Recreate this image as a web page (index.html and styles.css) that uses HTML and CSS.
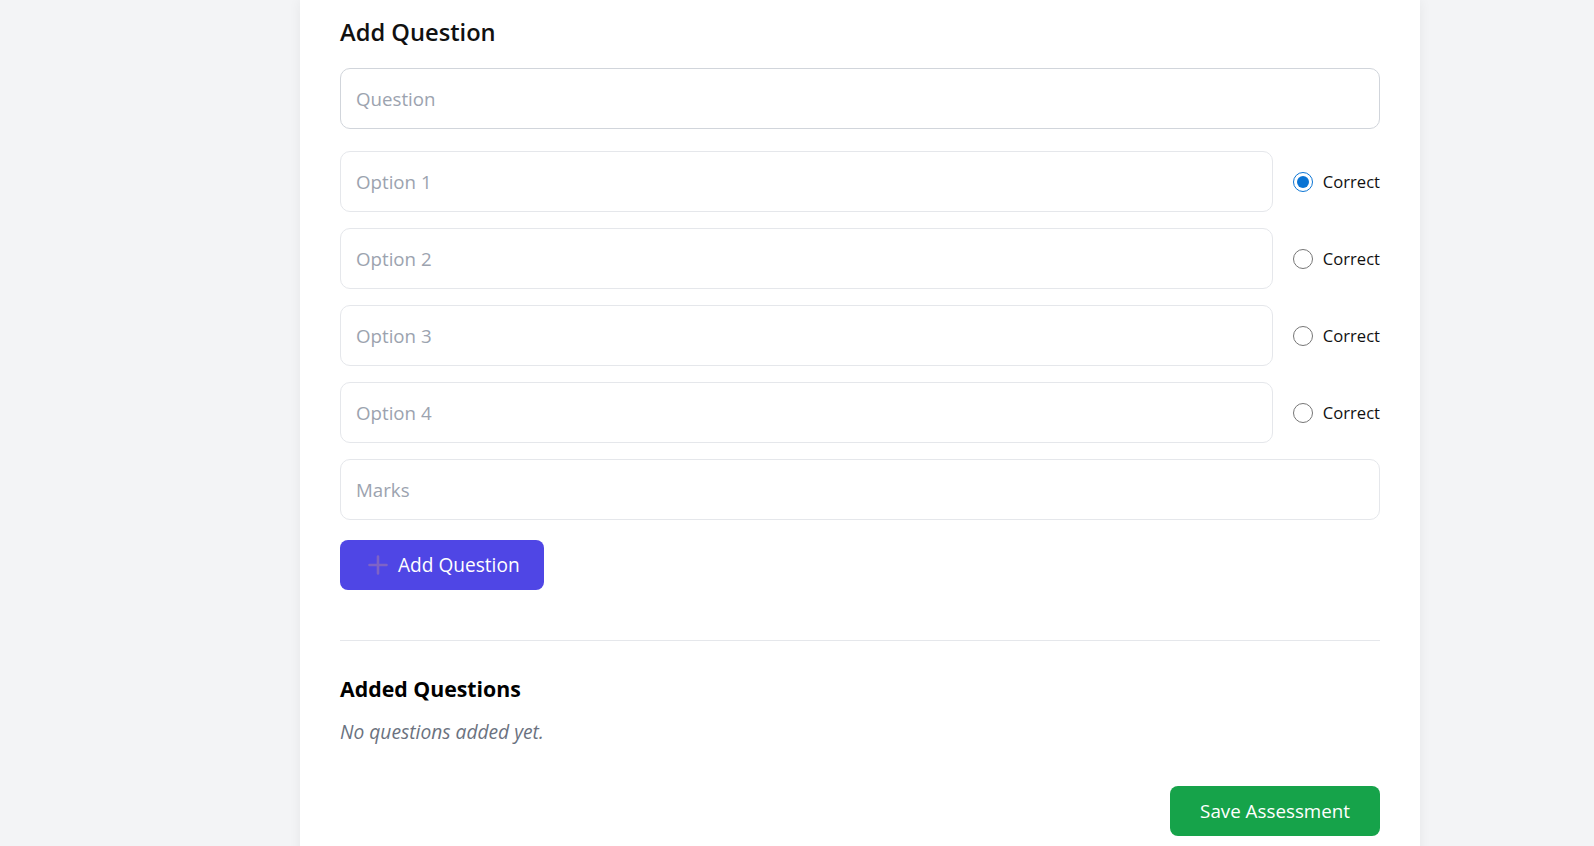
FILE: index.html
```html
<!DOCTYPE html>
<html lang="en">
<head>
<meta charset="utf-8">
<title>Add Question</title>
<link rel="stylesheet" href="styles.css">
</head>
<body>
<div class="page">
  <main class="card">
    <h2 class="section-title">Add Question</h2>
    <form class="question-form">
      <input class="field field-strong" type="text" placeholder="Question">
      <div class="options">
        <div class="option-row">
          <input class="field" type="text" placeholder="Option 1">
          <label class="correct"><input class="radio" type="radio" name="correct" checked><span>Correct</span></label>
        </div>
        <div class="option-row">
          <input class="field" type="text" placeholder="Option 2">
          <label class="correct"><input class="radio" type="radio" name="correct"><span>Correct</span></label>
        </div>
        <div class="option-row">
          <input class="field" type="text" placeholder="Option 3">
          <label class="correct"><input class="radio" type="radio" name="correct"><span>Correct</span></label>
        </div>
        <div class="option-row">
          <input class="field" type="text" placeholder="Option 4">
          <label class="correct"><input class="radio" type="radio" name="correct"><span>Correct</span></label>
        </div>
        <input class="field" type="text" placeholder="Marks">
      </div>
      <div class="form-actions">
        <button type="button" class="btn btn-add">
          <svg class="plus" viewBox="0 0 20 20" width="20" height="20" aria-hidden="true"><path d="M10 1.5v17M1.5 10h17" stroke="#7e63c6" stroke-width="2.6" stroke-linecap="round" fill="none"/></svg>
          <span>Add Question</span>
        </button>
      </div>
    </form>
    <hr class="divider">
    <h3 class="sub-title">Added Questions</h3>
    <p class="empty">No questions added yet.</p>
    <div class="save-row">
      <button type="button" class="btn btn-save">Save Assessment</button>
    </div>
  </main>
</div>
</body>
</html>
```

FILE: styles.css
```css
html, body {
  margin: 0;
  padding: 0;
}
body {
  background: #f3f4f6;
  font-family: "Open Sans", "Noto Sans", "Liberation Sans", sans-serif;
  color: #111111;
  height: 846px;
  overflow: hidden;
}
.page {
  padding-left: 300px;
}
.card {
  box-sizing: border-box;
  width: 1120px;
  min-height: 900px;
  background: #ffffff;
  padding: 16px 40px 40px;
  box-shadow: 0 0 12px rgba(0, 0, 0, 0.06);
}
.section-title {
  margin: 0;
  font-size: 23.7px;
  line-height: 32px;
  font-weight: 600;
  color: #111111;
}
.question-form {
  display: flex;
  flex-direction: column;
  margin-top: 20px;
}
.field {
  box-sizing: border-box;
  width: 100%;
  height: 61px;
  padding: 0 15px;
  border: 1px solid #e5e7eb;
  border-radius: 10px;
  background: #ffffff;
  font-family: inherit;
  font-size: 18.7px;
  color: #111111;
  outline: none;
}
.field::placeholder {
  color: #9ca3af;
}
.field-strong {
  border-color: #d1d5db;
}
.options {
  display: flex;
  flex-direction: column;
  gap: 16px;
  margin-top: 22px;
}
.option-row {
  display: flex;
  align-items: center;
}
.option-row .field {
  flex: 1;
}
.correct {
  display: flex;
  align-items: center;
  gap: 10px;
  margin-left: 20px;
  font-size: 16.6px;
  color: #111111;
}
.radio {
  width: 20px;
  height: 20px;
  margin: 0;
  accent-color: #0a74d4;
}
.form-actions {
  margin-top: 20px;
}
.btn {
  border: none;
  font-family: inherit;
  color: #ffffff;
  cursor: pointer;
}
.btn-add {
  display: inline-flex;
  align-items: center;
  gap: 10px;
  height: 50px;
  padding: 0 24px 0 28px;
  border-radius: 8px;
  background: #4f46e5;
  font-size: 19.1px;
}
.plus {
  display: block;
}
.divider {
  margin: 50px 0 0;
  border: none;
  border-top: 1px solid #e5e7eb;
  height: 0;
}
.sub-title {
  margin: 34px 0 0;
  font-size: 21.3px;
  line-height: 28px;
  font-weight: 700;
  color: #000000;
}
.empty {
  margin: 15px 0 0;
  font-size: 19.2px;
  line-height: 28px;
  font-style: italic;
  color: #6b7280;
}
.save-row {
  display: flex;
  justify-content: flex-end;
  margin-top: 40px;
}
.btn-save {
  height: 50px;
  padding: 0 30px;
  border-radius: 8px;
  background: #16a34a;
  font-size: 18.8px;
}
```
